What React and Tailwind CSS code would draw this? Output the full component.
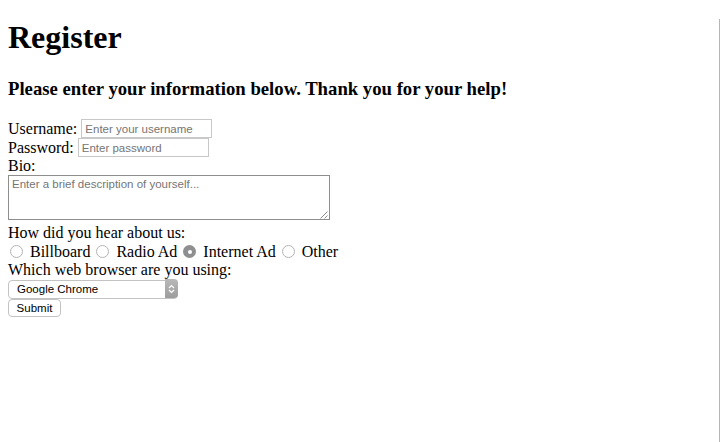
export default function App() {
  return (
    <div className="min-h-[442px] border-r border-[#b5b5b5] px-2 font-['Liberation_Serif',serif] text-base leading-[18px] text-black">
      <h1 className="mt-[19px] mb-[22px] text-[32px] font-bold leading-[37px]">Register</h1>
      <h3 className="mb-[20px] text-[18.72px] font-bold leading-[21px]">
        Please enter your information below. Thank you for your help!
      </h3>

      <form>
        <div className="flex h-[19px] items-center">
          <span>Username:</span>
          <input
            type="text"
            placeholder="Enter your username"
            className="ml-[4px] h-[19px] w-[131px] border border-[#c8c8c8] px-[3px] font-['Liberation_Sans',sans-serif] text-[11.5px] placeholder:text-[#757575] outline-none"
          />
        </div>
        <div className="flex h-[19px] items-center">
          <span>Password:</span>
          <input
            type="password"
            placeholder="Enter password"
            className="ml-[4px] h-[19px] w-[131px] border border-[#c8c8c8] px-[3px] font-['Liberation_Sans',sans-serif] text-[11.5px] placeholder:text-[#757575] outline-none"
          />
        </div>
        <div className="h-[18px]">Bio:</div>
        <div className="relative h-[49px]">
          <textarea
            placeholder="Enter a brief description of yourself..."
            className="block h-[45px] w-[322px] resize-none border border-[#8e8e8e] px-[3px] py-[1px] font-['Liberation_Sans',sans-serif] text-[11.5px] leading-[14px] placeholder:text-[#757575] outline-none"
          />
          <svg className="absolute left-[312px] top-[36px]" width="8" height="8" viewBox="0 0 8 8">
            <line x1="0.5" y1="7.5" x2="7.5" y2="0.5" stroke="#8a8a8a" strokeWidth="1" />
            <line x1="4.5" y1="7.5" x2="7.5" y2="4.5" stroke="#8a8a8a" strokeWidth="1" />
          </svg>
        </div>

        <div className="h-[18px]">How did you hear about us:</div>
        <div className="flex h-[19px] items-center">
          {[
            ["Billboard", false],
            ["Radio Ad", false],
            ["Internet Ad", true],
            ["Other", false],
          ].map(([label, checked]) => (
            <label key={label} className="flex items-center">
              <span
                className={
                  checked
                    ? "ml-[2px] mr-[7px] flex h-[13px] w-[13px] items-center justify-center rounded-full bg-[#8f8f8f]"
                    : "ml-[2px] mr-[7px] h-[13px] w-[13px] rounded-full border border-[#b4b4b4] bg-white"
                }
              >
                {checked && <span className="h-[4px] w-[4px] rounded-full bg-white" />}
              </span>
              <span className="mr-[4px]">{label}</span>
            </label>
          ))}
        </div>

        <div className="h-[18px]">Which web browser are you using:</div>
        <div className="relative mb-[1px] h-[19px] w-[170px]">
          <select
            defaultValue="chrome"
            className="h-[19px] w-[170px] appearance-none rounded-[4px] border border-[#c3c3c3] bg-white pl-[8px] font-['Liberation_Sans',sans-serif] text-[11.5px] leading-[17px] text-black outline-none"
          >
            <option value="chrome">Google Chrome</option>
            <option value="firefox">Firefox</option>
            <option value="safari">Safari</option>
          </select>
          <div className="pointer-events-none absolute right-0 top-0 flex h-[19px] w-[13px] items-center justify-center rounded-r-[4px] bg-gradient-to-b from-[#b9b9b9] to-[#9c9c9c]">
            <svg width="7" height="10" viewBox="0 0 7 10" fill="none" stroke="white" strokeWidth="1.2">
              <polyline points="1,4 3.5,1.5 6,4" />
              <polyline points="1,6 3.5,8.5 6,6" />
            </svg>
          </div>
        </div>
        <button
          type="button"
          className="block h-[18px] w-[53px] rounded-[4px] border border-[#c3c3c3] bg-white font-['Liberation_Sans',sans-serif] text-[11.5px] leading-[16px] text-black"
        >
          Submit
        </button>
      </form>
    </div>
  );
}
